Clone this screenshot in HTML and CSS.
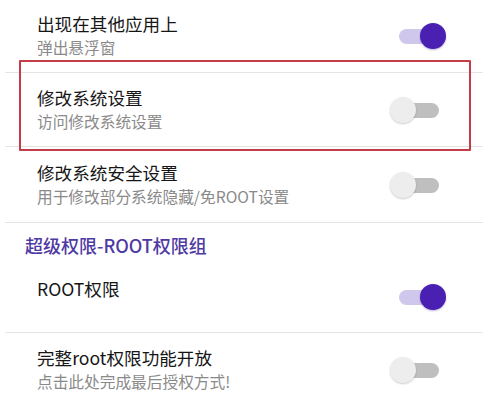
FILE: index.html
```html
<!DOCTYPE html>
<html lang="zh-CN">
<head>
<meta charset="utf-8">
<link rel="stylesheet" href="styles.css">
</head>
<body>
<div class="screen">
  <div class="list">
    <div class="item r1">
      <div class="text">
        <div class="title">出现在其他应用上</div>
        <div class="summary">弹出悬浮窗</div>
      </div>
      <span class="switch on"><span class="track"></span><span class="thumb"></span></span>
    </div>
    <div class="item r2">
      <div class="text">
        <div class="title">修改系统设置</div>
        <div class="summary">访问修改系统设置</div>
      </div>
      <span class="switch"><span class="track"></span><span class="thumb"></span></span>
    </div>
    <div class="item r3">
      <div class="text">
        <div class="title">修改系统安全设置</div>
        <div class="summary">用于修改部分系统隐藏/免ROOT设置</div>
      </div>
      <span class="switch"><span class="track"></span><span class="thumb"></span></span>
    </div>
    <div class="category">超级权限-ROOT权限组</div>
    <div class="item r4">
      <div class="text single">
        <div class="title">ROOT权限</div>
      </div>
      <span class="switch on"><span class="track"></span><span class="thumb"></span></span>
    </div>
    <div class="item r5 last">
      <div class="text">
        <div class="title">完整root权限功能开放</div>
        <div class="summary">点击此处完成最后授权方式!</div>
      </div>
      <span class="switch"><span class="track"></span><span class="thumb"></span></span>
    </div>
  </div>
  <div class="highlight"></div>
</div>
</body>
</html>
```
FILE: styles.css
```css
html, body {
  margin: 0;
  padding: 0;
  background: #ffffff;
}
body {
  font-family: "Noto Sans CJK SC", "Noto Sans", sans-serif;
  width: 500px;
  height: 401px;
  overflow: hidden;
}
.screen {
  position: relative;
  width: 500px;
  height: 401px;
  overflow: hidden;
}
.list {
  margin: 0 17px 0 5px;
}
.item {
  display: flex;
  align-items: center;
  justify-content: space-between;
  box-sizing: border-box;
  padding-left: 32px;
  padding-right: 37px;
  border-bottom: 1px solid #e4e4e4;
}
.item.last {
  border-bottom: none;
}
.r1 { height: 73px; }
.r2 { height: 74px; }
.r3 { height: 76px; }
.r4 { height: 72px; }
.r5 { height: 74px; }
.text {
  display: flex;
  flex-direction: column;
}
.text.single {
  padding-bottom: 16px;
}
.title {
  font-size: 17.6px;
  line-height: 24px;
  color: #161616;
  font-weight: 400;
}
.summary {
  font-size: 15.7px;
  line-height: 24px;
  color: #8a8a8a;
}
.category {
  box-sizing: border-box;
  height: 38px;
  padding: 12px 0 0 20px;
  font-size: 18px;
  line-height: 20px;
  font-weight: 500;
  color: #4f3aa3;
}
.switch {
  position: relative;
  width: 56px;
  height: 28px;
  flex: none;
}
.track {
  position: absolute;
  left: 9px;
  top: 7px;
  width: 40px;
  height: 15px;
  border-radius: 8px;
  background: #bfbfbf;
}
.thumb {
  position: absolute;
  left: 0;
  top: 1px;
  width: 26px;
  height: 26px;
  border-radius: 50%;
  background: #ededed;
  box-shadow: 0 1px 2px rgba(0, 0, 0, 0.2);
}
.switch.on .track {
  background: #cfc7ec;
}
.switch.on .thumb {
  left: 30px;
  background: #4a20b2;
  box-shadow: 0 1px 2px rgba(40, 10, 120, 0.3);
}
.highlight {
  position: absolute;
  left: 19px;
  top: 60px;
  width: 452px;
  height: 91px;
  box-sizing: border-box;
  border: 2.5px solid #c43c47;
  border-radius: 1px;
}
```
